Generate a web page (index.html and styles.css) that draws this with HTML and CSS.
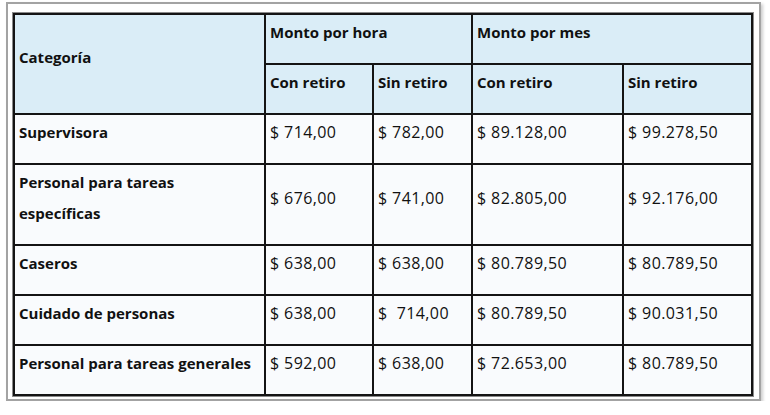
FILE: index.html
```html
<!DOCTYPE html>
<html lang="es">
<head>
<meta charset="utf-8">
<link rel="stylesheet" href="styles.css">
</head>
<body>
<div class="frame">
  <div class="tablewrap">
    <table class="sal">
      <colgroup>
        <col class="c1"><col class="c2"><col class="c3"><col class="c4"><col class="c5">
      </colgroup>
      <thead>
        <tr>
          <th rowspan="2" class="mid">Categoría</th>
          <th colspan="2">Monto por hora</th>
          <th colspan="2">Monto por mes</th>
        </tr>
        <tr>
          <th>Con retiro</th>
          <th>Sin retiro</th>
          <th>Con retiro</th>
          <th>Sin retiro</th>
        </tr>
      </thead>
      <tbody>
        <tr><th>Supervisora</th><td>$ 714,00</td><td>$ 782,00</td><td>$ 89.128,00</td><td>$ 99.278,50</td></tr>
        <tr><th>Personal para tareas<br>específicas</th><td class="mid">$ 676,00</td><td class="mid">$ 741,00</td><td class="mid">$ 82.805,00</td><td class="mid">$ 92.176,00</td></tr>
        <tr><th>Caseros</th><td>$ 638,00</td><td>$ 638,00</td><td>$ 80.789,50</td><td>$ 80.789,50</td></tr>
        <tr><th>Cuidado de personas</th><td>$ 638,00</td><td>$&nbsp; 714,00</td><td>$ 80.789,50</td><td>$ 90.031,50</td></tr>
        <tr><th>Personal para tareas generales</th><td>$ 592,00</td><td>$ 638,00</td><td>$ 72.653,00</td><td>$ 80.789,50</td></tr>
      </tbody>
    </table>
  </div>
</div>
</body>
</html>
```
FILE: styles.css
```css
html, body {
  margin: 0;
  padding: 0;
  background: #ffffff;
}
body {
  font-family: "Open Sans", "Liberation Sans", sans-serif;
  color: #111111;
}
.frame {
  margin: 2px 0 0 6px;
  width: 747px;
  height: 387px;
  border: 2px solid #a3a3a3;
  box-shadow: 2px 2px 3px rgba(0, 0, 0, 0.2);
  background: #ffffff;
  padding: 8px 0 0 4px;
  box-sizing: content-box;
}
.tablewrap {
  display: inline-block;
  border: 1px solid #8a8a8a;
}
.sal {
  border-collapse: collapse;
  table-layout: fixed;
  width: 740px;
  font-size: 15px;
  line-height: 31px;
}
.c1 { width: 251px; }
.c2 { width: 108px; }
.c3 { width: 99px; }
.c4 { width: 151px; }
.c5 { width: 129px; }
.sal th, .sal td {
  border: 2px solid #141414;
  padding: 2px 4px 15px 4px;
  text-align: left;
  vertical-align: top;
  white-space: nowrap;
}
.sal th {
  font-weight: 700;
}
.sal td {
  font-weight: 400;
  font-size: 16px;
  letter-spacing: 0.4px;
}
.sal thead th {
  background: #daedf7;
}
.sal tbody th, .sal tbody td {
  background: #f9fbfd;
}
.sal .mid {
  vertical-align: middle;
}
```
